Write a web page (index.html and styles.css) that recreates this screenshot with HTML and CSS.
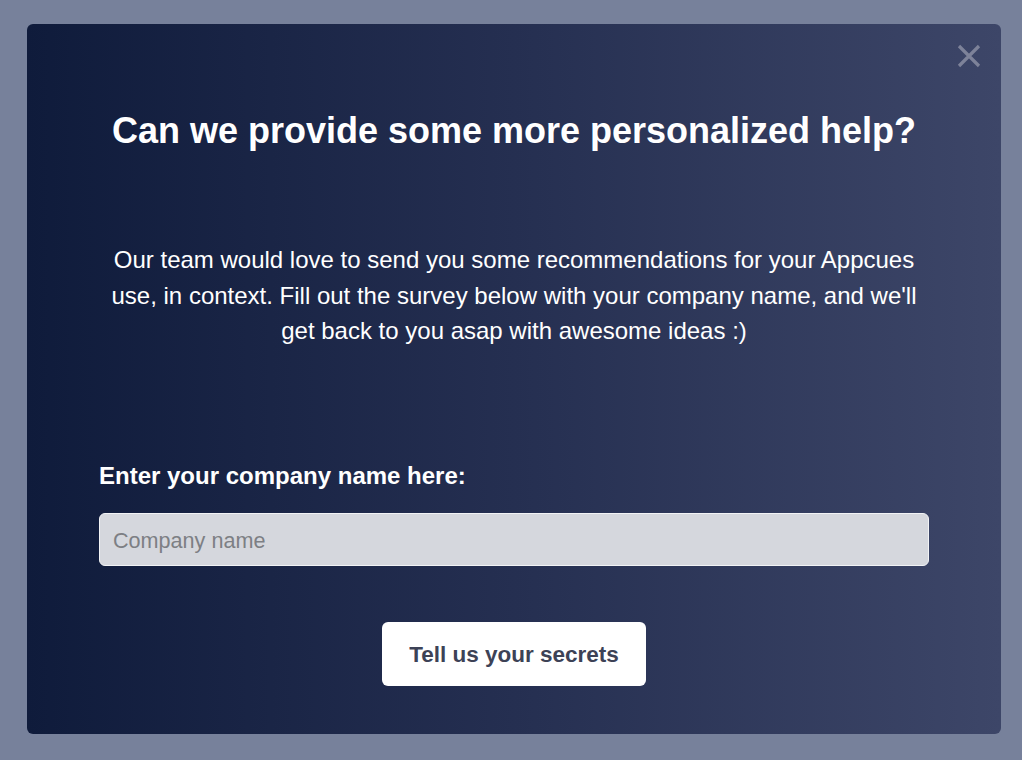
FILE: index.html
```html
<!DOCTYPE html>
<html lang="en">
<head>
<meta charset="UTF-8">
<meta name="viewport" content="width=device-width, initial-scale=1.0">
<title>Personalized help</title>
<link rel="stylesheet" href="styles.css">
</head>
<body>

<div class="overlay">
    <div class="modal">
        <button class="close" aria-label="Close">
            <svg width="24" height="24" viewBox="0 0 24 24">
                <path d="M2 2 L22 22 M22 2 L2 22" stroke="#7d8299" stroke-width="3.2" fill="none"/>
            </svg>
        </button>
        <h1 class="title">Can we provide some more personalized help?</h1>
        <p class="intro">Our team would love to send you some recommendations for your Appcues use, in context. Fill out the survey below with your company name, and we'll get back to you asap with awesome ideas :)</p>
        <label class="label" for="company">Enter your company name here:</label>
        <input type="text" id="company" class="field" placeholder="Company name">
        <div class="actions">
            <button class="submit">Tell us your secrets</button>
        </div>
    </div>
</div>

</body>
</html>
```
FILE: styles.css
```css
body {
    margin: 0;
    height: 100vh;
    background-color: #77819b;
    font-family: "Liberation Sans", Arial, sans-serif;
}

.overlay {
    padding: 24px 21px 26px 27px;
    box-sizing: border-box;
    height: 100%;
}

.modal {
    position: relative;
    height: 100%;
    box-sizing: border-box;
    padding: 0 72px;
    border-radius: 6px;
    background: linear-gradient(to right, #0f1b3b 0%, #252f51 50%, #3d4668 100%);
    color: #ffffff;
}

.close {
    position: absolute;
    top: 20px;
    right: 20px;
    background: none;
    border: none;
    padding: 0;
    cursor: pointer;
}

.title {
    margin: 0;
    padding-top: 87px;
    font-size: 36px;
    font-weight: bold;
    text-align: center;
    line-height: 40px;
}

.intro {
    margin: 91px 0 0;
    font-size: 24px;
    line-height: 35.5px;
    text-align: center;
}

.label {
    display: block;
    margin-top: 113px;
    font-size: 24px;
    font-weight: bold;
    line-height: 28px;
}

.field {
    display: block;
    width: 100%;
    box-sizing: border-box;
    height: 53px;
    margin-top: 23px;
    padding: 3px 13px 0;
    border: 1px solid #f2f3f5;
    border-radius: 6px;
    background-color: #d5d7dd;
    font-family: inherit;
    font-size: 21.6px;
    color: #333333;
    outline: none;
}

.field::placeholder {
    color: #7d7f84;
}

.actions {
    display: flex;
    justify-content: center;
    margin-top: 56px;
}

.submit {
    width: 264px;
    height: 64px;
    padding-top: 3px;
    border: none;
    border-radius: 6px;
    background-color: #ffffff;
    color: #3d4256;
    font-family: inherit;
    font-size: 22.5px;
    font-weight: bold;
    cursor: pointer;
}
```
